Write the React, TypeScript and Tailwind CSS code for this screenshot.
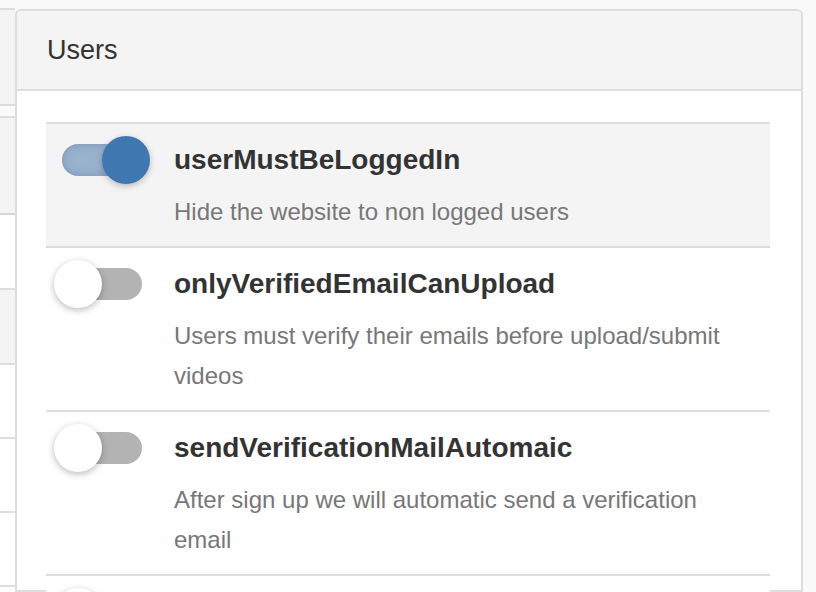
const settings = [
  {
    name: "userMustBeLoggedIn",
    description: "Hide the website to non logged users",
    on: true,
  },
  {
    name: "onlyVerifiedEmailCanUpload",
    description: "Users must verify their emails before upload/submit videos",
    on: false,
  },
  {
    name: "sendVerificationMailAutomaic",
    description: "After sign up we will automatic send a verification email",
    on: false,
  },
];

const Switch = ({ on }: { on: boolean }) => {
  return (
    <div className="relative h-[34px] w-[80px] shrink-0 flex items-center">
      <div
        className={
          on
            ? "h-[32px] w-[80px] rounded-full bg-[#98b2ce] shadow-[inset_0_0_8px_rgba(60,90,130,0.35)]"
            : "h-[32px] w-[80px] rounded-full bg-[#b3b3b3]"
        }
      />
      <div
        className={
          on
            ? "absolute top-[-7px] right-[-8px] h-[48px] w-[48px] rounded-full bg-[#3f77b1] shadow-[0_2px_6px_rgba(0,0,0,0.25)]"
            : "absolute top-[-7px] left-[-8px] h-[48px] w-[48px] rounded-full bg-white shadow-[0_2px_7px_rgba(0,0,0,0.28)]"
        }
      />
    </div>
  );
};

const SideStrip = () => {
  return (
    <div className="w-[15px] shrink-0 flex flex-col">
      <div className="h-[8px] bg-[#f9f9f9]" />
      <div className="h-[96px] bg-[#f4f4f4] border-t-2 border-[#dddddd]" />
      <div className="h-[12px] bg-[#fafafa] border-t-2 border-[#dddddd]" />
      <div className="h-[97px] bg-[#f4f4f4] border-t-2 border-[#dddddd]" />
      <div className="h-[75px] bg-white border-t-2 border-[#d6d6d6]" />
      <div className="h-[75px] bg-[#f4f4f4] border-t-2 border-[#dddddd]" />
      <div className="h-[74px] bg-white border-t-2 border-[#dddddd]" />
      <div className="h-[74px] bg-white border-t-2 border-[#dddddd]" />
      <div className="h-[74px] bg-white border-t-2 border-[#dddddd]" />
      <div className="flex-1 bg-white border-t-2 border-[#dddddd]" />
    </div>
  );
};

export default function App() {
  return (
    <div className="flex h-[592px] w-[816px] overflow-hidden bg-[#f9f9f9] font-['Liberation_Sans',Arial,sans-serif]">
      <SideStrip />

      {/* Users card */}
      <div className="mt-[9px] w-[788px] shrink-0 rounded-t-[6px] border-2 border-[#dddddd] bg-white">
        <div className="h-[80px] rounded-t-[4px] border-b-2 border-[#dddddd] bg-[#f4f4f4] pl-[30px] flex items-center">
          <h3 className="text-[27px] leading-none text-[#333333] mt-[1px]">Users</h3>
        </div>

        <div className="pl-[29px] pr-[31px] pt-[31px]">
          <ul>
            {settings.map((s) => (
              <li
                key={s.name}
                className={
                  s.on
                    ? "flex border-t-2 border-[#dddddd] bg-[#f4f4f4] pl-[16px] pr-[16px] pt-[19px] pb-[14px]"
                    : "flex border-t-2 border-[#dddddd] bg-white pl-[16px] pr-[16px] pt-[19px] pb-[14px]"
                }
              >
                <Switch on={s.on} />
                <div className="ml-[32px] flex-1">
                  <div className="text-[28px] leading-[34px] font-bold text-[#333333]">{s.name}</div>
                  <p className="mt-[15px] text-[24px] leading-[40px] text-[#777777]">{s.description}</p>
                </div>
              </li>
            ))}
            {/* next setting, only its switch peeks in */}
            <li className="flex border-t-2 border-[#dddddd] bg-white pl-[16px] pt-[19px] h-[60px]">
              <Switch on={false} />
            </li>
          </ul>
        </div>
      </div>
    </div>
  );
}
